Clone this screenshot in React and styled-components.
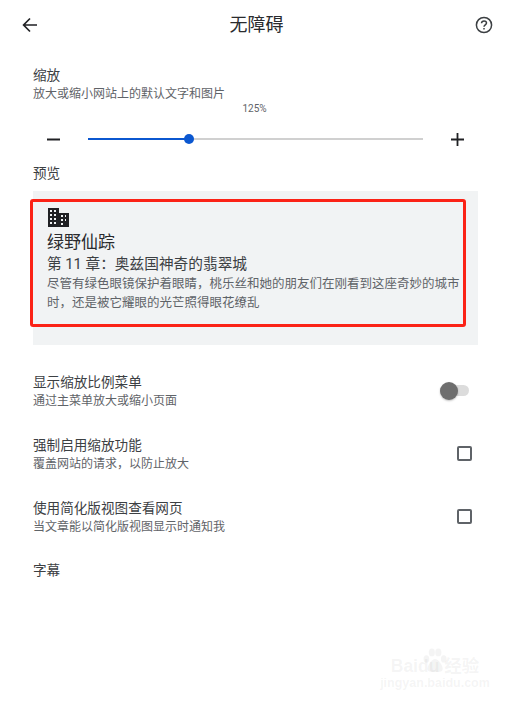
import styled, { createGlobalStyle } from "styled-components";

const color = {
  text: "#202124",
  sub: "#5f6368",
  blue: "#0b57d0",
  track: "#d0d0d0",
  preview: "#f1f3f4",
};

const GlobalStyle = createGlobalStyle`
  html, body {
    margin: 0;
    padding: 0;
    background: #fff;
  }
  body {
    font-family: Roboto, "Noto Sans CJK SC", sans-serif;
    color: ${color.text};
  }
`;

const Page = styled.div`
  position: relative;
  width: 508px;
  height: 701px;
  overflow: hidden;
`;

const Header = styled.header`
  height: 50px;
  padding: 0 15px 0 22px;
  display: flex;
  align-items: center;
  justify-content: space-between;
  box-sizing: border-box;
`;

const Title = styled.h1`
  margin: 0;
  font-size: 18px;
  font-weight: 400;
  line-height: 50px;
  color: #2a2b2e;
`;

const IconSvg = styled.svg`
  display: block;
  flex: none;
`;

const Content = styled.main`
  padding: 16px 30px 0 33px;
`;

const Label = styled.div`
  font-size: 13.6px;
  line-height: 19px;
  color: #3c4043;
`;

const Hint = styled.div`
  font-size: 12px;
  line-height: 17px;
  margin-top: 1px;
  color: ${color.sub};
`;

const Percent = styled.div`
  font-size: 10px;
  line-height: 12px;
  text-align: center;
  color: ${color.sub};
  transform: translateX(-1px);
`;

const ZoomRow = styled.div`
  height: 34px;
  margin-top: 7px;
  display: grid;
  grid-template-columns: 55px 335px 1fr;
  align-items: center;
`;

const Track = styled.div`
  position: relative;
  height: 2px;
  background: ${color.track};
`;

const TrackFill = styled.div`
  height: 100%;
  background: ${color.blue};
`;

const Thumb = styled.div`
  position: absolute;
  top: -4px;
  width: 10px;
  height: 10px;
  margin-left: -5px;
  border-radius: 50%;
  background: ${color.blue};
`;

const StepIcon = styled.div`
  display: flex;
  padding-left: ${(p) => p.$inset}px;
`;

const PreviewTitle = styled(Label)`
  margin-top: 8px;
`;

const PreviewBox = styled.section`
  width: 445px;
  height: 154px;
  margin-top: 8px;
  padding: 17px 14px 0;
  box-sizing: border-box;
  background: ${color.preview};
`;

const BookName = styled.div`
  font-size: 17px;
  line-height: 23px;
  margin-top: 4px;
  color: #2a2b2e;
`;

const Chapter = styled.div`
  font-size: 14.7px;
  line-height: 20px;
  color: #3c4043;
`;

const Body = styled.p`
  margin: 0;
  width: 418px;
  font-size: 12.5px;
  line-height: 19px;
  color: ${color.sub};
`;

const Rows = styled.div`
  margin-top: 28px;
  display: flex;
  flex-direction: column;
  gap: 26px;
`;

const Row = styled.div`
  display: flex;
  align-items: center;
  justify-content: space-between;
  height: 37px;
  padding-right: 6px;
`;

const Switch = styled.div`
  position: relative;
  width: 29px;
  height: 18px;
  margin: 0 3px 2px 0;
  display: flex;
  align-items: center;
  &::before {
    content: "";
    display: block;
    width: 100%;
    height: 11px;
    border-radius: 6px;
    background: #dcdcdc;
  }
  &::after {
    content: "";
    position: absolute;
    left: 0;
    top: 0;
    width: 18px;
    height: 18px;
    border-radius: 50%;
    background: #6e6e6e;
    box-shadow: 0 1px 2px rgba(0, 0, 0, 0.25);
  }
`;

const Check = styled.div`
  width: 15px;
  height: 15px;
  margin-bottom: 3px;
  box-sizing: border-box;
  border: 2px solid #5f6368;
  border-radius: 2px;
`;

const Captions = styled(Label)`
  margin-top: 25px;
`;

// red annotation drawn over the screenshot
const Annotation = styled.div`
  position: absolute;
  left: 30px;
  top: 199px;
  width: 436px;
  height: 128px;
  box-sizing: border-box;
  border: 3px solid #fb2216;
  border-radius: 3px;
  pointer-events: none;
`;

const Watermark = styled.div`
  position: absolute;
  left: 377px;
  top: 656px;
  width: 116px;
  color: rgba(150, 150, 150, 0.1);
  pointer-events: none;
  text-align: center;
`;

const MarkLine = styled.div`
  font-family: "Liberation Sans", "Noto Sans CJK SC", sans-serif;
  font-size: ${(p) => p.$size}px;
  font-weight: 700;
  line-height: ${(p) => p.$height}px;
  white-space: nowrap;
`;

const Paw = styled.svg`
  position: absolute;
  left: 44px;
  top: -9px;
`;

const BackIcon = () => (
  <IconSvg width="16" height="16" viewBox="0 0 16 16" fill="none" stroke="#202124" strokeWidth="1.7">
    <path d="M15 8H2M8 1.5 1.6 8 8 14.5" />
  </IconSvg>
);

const HelpIcon = () => (
  <IconSvg width="18" height="18" viewBox="0 0 18 18" fill="none" stroke="#3c4043" strokeWidth="1.5">
    <circle cx="9" cy="9" r="7.6" />
    <path d="M6.5 7.2C6.5 5.7 7.6 4.9 9 4.9s2.5.9 2.5 2.2c0 1.8-2.5 1.9-2.5 3.7" />
    <path d="M9 12v1.6" />
  </IconSvg>
);

const MinusIcon = () => (
  <IconSvg width="13" height="13" viewBox="0 0 13 13" stroke="#202124" strokeWidth="2">
    <path d="M0 6.5h13" />
  </IconSvg>
);

const PlusIcon = () => (
  <IconSvg width="13" height="13" viewBox="0 0 13 13" stroke="#202124" strokeWidth="1.8">
    <path d="M0 6.5h13M6.5 0v13" />
  </IconSvg>
);

const BuildingIcon = () => (
  <IconSvg width="22" height="19" viewBox="0 0 22 19">
    <path
      fill="#202124"
      fillRule="evenodd"
      d="M1 0h11v5h10v14H1zM3 2v2h2V2zm4 0v2h2V2zM3 6v2h2V6zm4 0v2h2V6zM3 10v2h2v-2zm4 0v2h2v-2zM3 14v2h2v-2zm4 0v2h2v-2zm7-7v2h2V7zm0 4v2h2v-2zm0 4v2h2v-2zm4-8v2h1V7zm0 4v2h1v-2z"
    />
  </IconSvg>
);

const settings = [
  { title: "显示缩放比例菜单", hint: "通过主菜单放大或缩小页面", control: <Switch /> },
  { title: "强制启用缩放功能", hint: "覆盖网站的请求，以防止放大", control: <Check /> },
  { title: "使用简化版视图查看网页", hint: "当文章能以简化版视图显示时通知我", control: <Check /> },
];

const App = () => {
  const zoomPercent = 30;

  return (
    <Page>
      <GlobalStyle />
      <Header>
        <BackIcon />
        <Title>无障碍</Title>
        <HelpIcon />
      </Header>
      <Content>
        <Label>缩放</Label>
        <Hint>放大或缩小网站上的默认文字和图片</Hint>
        <Percent>125%</Percent>
        <ZoomRow>
          <StepIcon $inset={14}>
            <MinusIcon />
          </StepIcon>
          <Track>
            <TrackFill style={{ width: `${zoomPercent}%` }} />
            <Thumb style={{ left: `${zoomPercent}%` }} />
          </Track>
          <StepIcon $inset={28}>
            <PlusIcon />
          </StepIcon>
        </ZoomRow>
        <PreviewTitle>预览</PreviewTitle>
        <PreviewBox>
          <BuildingIcon />
          <BookName>绿野仙踪</BookName>
          <Chapter>第 11 章：奥兹国神奇的翡翠城</Chapter>
          <Body>尽管有绿色眼镜保护着眼睛，桃乐丝和她的朋友们在刚看到这座奇妙的城市时，还是被它耀眼的光芒照得眼花缭乱</Body>
        </PreviewBox>
        <Rows>
          {settings.map((item) => (
            <Row key={item.title}>
              <div>
                <Label>{item.title}</Label>
                <Hint>{item.hint}</Hint>
              </div>
              {item.control}
            </Row>
          ))}
        </Rows>
        <Captions>字幕</Captions>
      </Content>
      <Annotation />
      <Watermark>
        <Paw width="26" height="26" viewBox="0 0 24 24" fill="currentColor">
          <ellipse cx="5" cy="11" rx="2.6" ry="3.4" />
          <ellipse cx="10" cy="5" rx="2.8" ry="3.6" />
          <ellipse cx="16" cy="5" rx="2.8" ry="3.6" />
          <ellipse cx="21" cy="11" rx="2.6" ry="3.4" />
          <path d="M13 11c3 0 7 6 7 9s-3 3-7 3-7 0-7-3 4-9 7-9z" />
        </Paw>
        <MarkLine $size={17.5} $height={20}>Baidu 经验</MarkLine>
        <MarkLine $size={12.5} $height={14}>jingyan.baidu.com</MarkLine>
      </Watermark>
    </Page>
  );
};

export default App;
